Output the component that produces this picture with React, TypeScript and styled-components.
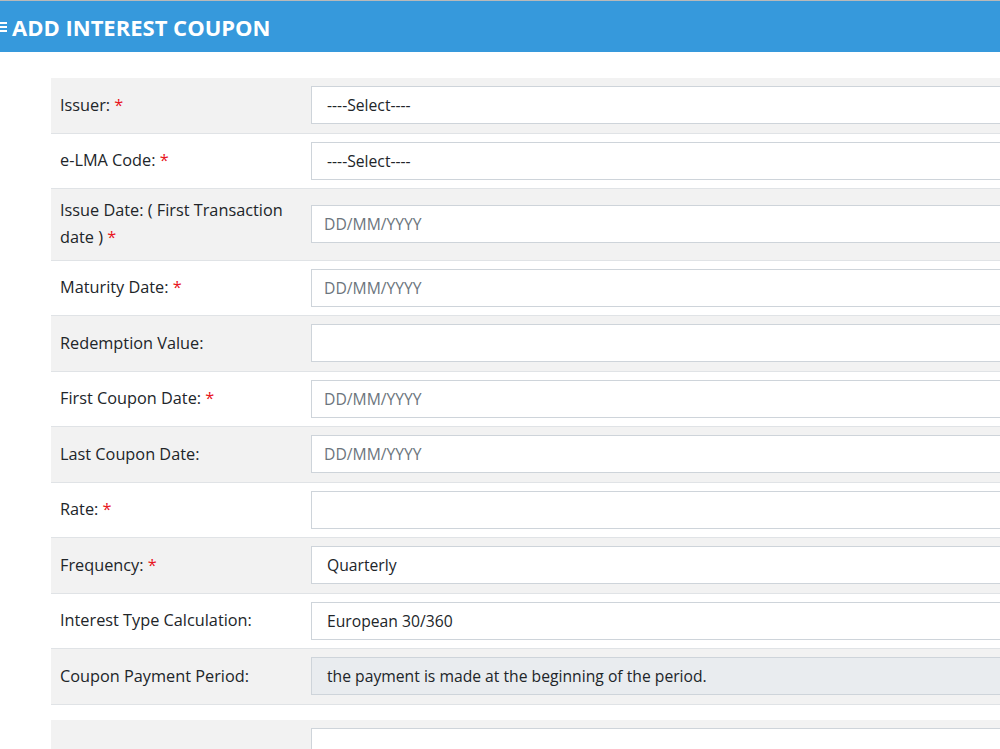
import * as React from 'react'
import styled, { createGlobalStyle } from 'styled-components'

const GlobalStyle = createGlobalStyle`
  html, body {
    margin: 0;
    padding: 0;
    background: #fff;
    overflow: hidden;
  }
  body {
    font-family: 'Open Sans', 'Noto Sans', sans-serif;
    color: #212529;
  }
`

const Page = styled.div`
  width: 1160px;
`

const Header = styled.div`
  display: flex;
  align-items: center;
  gap: 5px;
  height: 51px;
  border-top: 1px solid #b9b9b9;
  background: #3699dc;
  color: #fff;
`

const Title = styled.h1`
  margin: 0;
  font-size: 22px;
  font-weight: 700;
`

const Content = styled.div`
  padding: 26px 0 0 51px;
  display: flex;
  flex-direction: column;
  gap: 15px;
`

const Table = styled.div`
  display: flex;
  flex-direction: column;
`

const Row = styled.div<{ $shade: boolean }>`
  display: grid;
  grid-template-columns: 260px 1fr;
  align-items: center;
  background: ${p => (p.$shade ? '#f2f2f2' : '#fff')};
  border-bottom: 1px solid #e0e3e6;
  padding: 8.25px 0;
`

const Label = styled.div`
  padding: 0 9px;
  font-size: 16.3px;
  line-height: 27px;
`

const Req = styled.span`
  color: #e8141c;
`

const Field = styled.div<{ $disabled?: boolean; $placeholder?: boolean; $select?: boolean }>`
  box-sizing: border-box;
  height: 38px;
  display: flex;
  align-items: center;
  padding-left: ${p => (p.$select ? '15px' : '12px')};
  border: 1px solid #ced4da;
  background: ${p => (p.$disabled ? '#e9ecef' : '#fff')};
  color: ${p => (p.$placeholder ? '#6c757d' : '#212529')};
  font-size: 15.7px;
`

type F = {
  label: string
  req?: boolean
  value?: string
  kind?: 'select' | 'date' | 'text' | 'disabled'
}

const fields: F[] = [
  { label: 'Issuer:', req: true, value: '----Select----', kind: 'select' },
  { label: 'e-LMA Code:', req: true, value: '----Select----', kind: 'select' },
  { label: 'Issue Date: ( First Transaction date )', req: true, kind: 'date' },
  { label: 'Maturity Date:', req: true, kind: 'date' },
  { label: 'Redemption Value:', kind: 'text' },
  { label: 'First Coupon Date:', req: true, kind: 'date' },
  { label: 'Last Coupon Date:', kind: 'date' },
  { label: 'Rate:', req: true, kind: 'text' },
  { label: 'Frequency:', req: true, value: 'Quarterly', kind: 'select' },
  { label: 'Interest Type Calculation:', value: 'European 30/360', kind: 'select' },
  { label: 'Coupon Payment Period:', value: 'the payment is made at the beginning of the period.', kind: 'disabled' },
]

function MenuIcon() {
  return (
    <svg width="7" height="12" viewBox="0 0 7 12">
      <rect x="0" y="1" width="7" height="2" fill="#fff" />
      <rect x="0" y="5" width="7" height="2" fill="#fff" />
      <rect x="0" y="9" width="7" height="2" fill="#fff" />
    </svg>
  )
}

export default function App() {
  return (
    <Page>
      <GlobalStyle />
      <Header>
        <MenuIcon />
        <Title>ADD INTEREST COUPON</Title>
      </Header>
      <Content>
        <Table>
          {fields.map((f, i) => (
            <Row key={f.label} $shade={i % 2 === 0}>
              <Label>
                {f.label}
                {f.req && <Req> *</Req>}
              </Label>
              <Field
                $select={f.kind === 'select' || f.kind === 'disabled'}
                $disabled={f.kind === 'disabled'}
                $placeholder={f.kind === 'date'}
              >
                {f.kind === 'date' ? 'DD/MM/YYYY' : f.value}
              </Field>
            </Row>
          ))}
        </Table>
        <Table>
          <Row $shade>
            <Label>&nbsp;</Label>
            <Field />
          </Row>
        </Table>
      </Content>
    </Page>
  )
}
